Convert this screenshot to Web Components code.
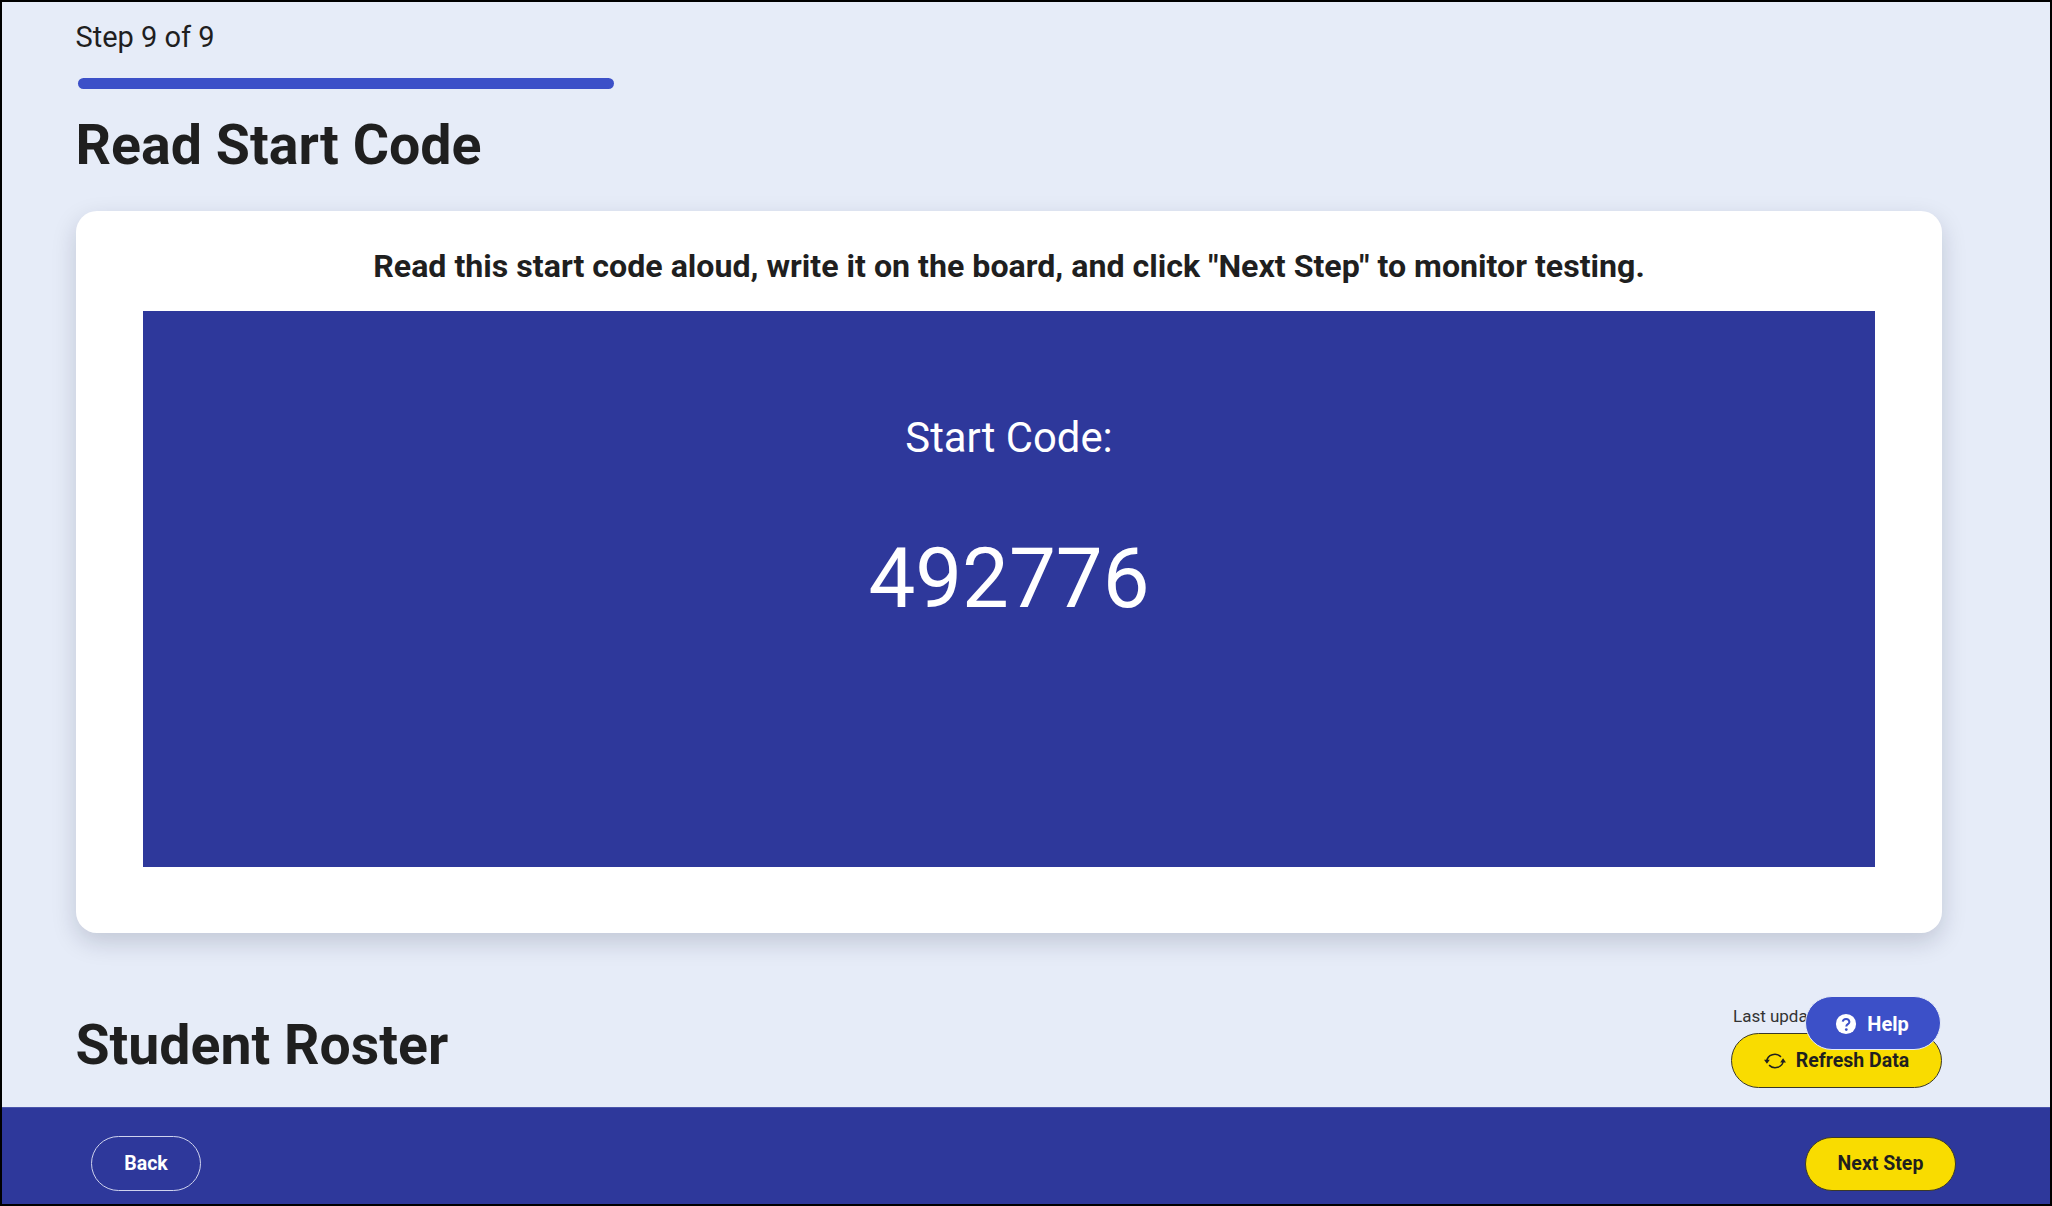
<!DOCTYPE html>
<html lang="en"><head><meta charset="utf-8"><title>Read Start Code</title>
<style>html,body{margin:0;padding:0;height:100%;background:#000}body{font-family:Roboto,"Liberation Sans",sans-serif}</style>
</head><body>
<app-frame>
  <step-progress label="Step 9 of 9"></step-progress>
  <section-title>Read Start Code</section-title>
  <start-card instruction='Read this start code aloud, write it on the board, and click "Next Step" to monitor testing.' code="492776"></start-card>
  <roster-head></roster-head>
  <app-footer slot="footer"></app-footer>
  <help-button slot="overlay"></help-button>
</app-frame>
<script>
function def(name, html, init){
  customElements.define(name, class extends HTMLElement{
    constructor(){super();const r=this.attachShadow({mode:'open'});r.innerHTML=html; }
    connectedCallback(){ if(init) init(this,this.shadowRoot); }
  });
}
def('app-frame',`<style>
:host{display:flex;flex-direction:column;box-sizing:border-box;width:2052px;height:1206px;border:2px solid #000;background:#e6ecf8;position:relative;overflow:hidden;color:#1f1f1f}
main{flex:1;min-height:0;overflow:hidden;padding:0 108px 0 74px}
.o{position:absolute;left:1803px;top:994px}
</style><main><slot></slot></main><slot name="footer"></slot><div class="o"><slot name="overlay"></slot></div>`);
def('step-progress',`<style>
:host{display:block;padding-top:15.5px}
.l{font:400 29px/38px Roboto,sans-serif;color:#1f1f1f;margin-left:-.5px}
.b{margin:22.5px 0 0 2px;width:536px;height:11px;border-radius:6px;background:#3c50c8}
</style><div class="l"></div><div class="b"></div>`,(h,r)=>{r.querySelector('.l').textContent=h.getAttribute('label')});
def('section-title',`<style>
:host{display:block;margin-top:22.5px;margin-left:-.5px;font:700 55.5px/68px Roboto,sans-serif;color:#1f1f1f}
</style><slot></slot>`);
def('start-card',`<style>
:host{display:block;box-sizing:border-box;margin-top:31.7px;height:722px;background:#fff;border-radius:21px;padding:34.5px 67px 0;box-shadow:0 9px 24px rgba(10,20,50,.17)}
p{margin:0;height:65.5px;font:700 32.15px/40px Roboto,sans-serif;color:#1f1f1f;text-align:center}
.box{height:556px;background:#2e389b;color:#fff;text-align:center;box-sizing:border-box;padding-top:100px}
.a{font:400 41.8px/54px Roboto,sans-serif}
.c{font:400 83.4px/100px Roboto,sans-serif;margin-top:64.2px}
</style><p></p><div class="box"><div class="a">Start Code:</div><div class="c"></div></div>`,(h,r)=>{r.querySelector('p').textContent=h.getAttribute('instruction');r.querySelector('.c').textContent=h.getAttribute('code')});
def('roster-head',`<style>
:host{display:flex;justify-content:space-between;align-items:flex-start;margin-top:68.5px}
h2{margin:0;margin-left:-.5px;font:700 55.4px/68px Roboto,sans-serif;color:#1f1f1f;padding-top:10px}
.r{display:flex;flex-direction:column;align-items:flex-start;width:211px}
.u{font:400 17px/22px Roboto,sans-serif;color:#333;margin:3px 0 6.3px 2px;white-space:nowrap}
</style><h2>Student Roster</h2><div class="r"><div class="u">Last updated</div><pill-button variant="refresh">Refresh Data</pill-button></div>`);
def('pill-button',`<style>
:host{display:inline-flex;align-items:center;justify-content:center;box-sizing:border-box;height:54px;border-radius:28px;font:700 19.5px/24px Roboto,sans-serif;gap:10px}
:host([variant=refresh]){width:211px;height:55.5px;background:#f9dc00;border:1.5px solid #3a3828;color:#1f1f1f}
:host([variant=next]){width:151px;height:54px;background:#f9dc00;border:1.5px solid #3a3828;color:#1f1f1f}
:host([variant=back]){width:110px;height:55px;border:1.5px solid #cfd3ee;color:#fff;background:transparent}
svg{display:none;width:22px;height:22px}
:host([variant=refresh]) svg{display:block}
</style><svg viewBox="0 0 24 24" fill="none" stroke="#1f1f1f" stroke-width="1.7"><path d="M3 12.5C3.5 4.5 13.5 2.5 18.5 7.5"/><path d="M21 11.5C20.5 19.5 10.5 21.5 5.5 16.5"/><path d="M0 10.5h6.4L3.2 15zM17.6 13.5h6.4L20.8 9z" fill="#1f1f1f" stroke="none"/></svg><slot></slot>`);
def('app-footer',`<style>
:host{display:flex;justify-content:space-between;align-items:center;height:97px;flex:none;background:#2e389b;padding:15px 94px 0 89px;border-top:1px solid #4a55ab;box-sizing:border-box}
</style><pill-button variant="back">Back</pill-button><pill-button variant="next">Next Step</pill-button>`);
def('help-button',`<style>
:host{display:flex;align-items:center;justify-content:center;gap:10px;box-sizing:border-box;width:136px;height:54px;border-radius:27px;background:#3c50c8;border:1px solid #e6ecf8;color:#fff;font:700 20px/24px Roboto,sans-serif;padding:1px 2px 0 0}
svg{width:22px;height:22px}
</style><svg viewBox="0 0 24 24"><circle cx="12" cy="12" r="11" fill="#fff"/><path d="M8.4 9.4a3.7 3.7 0 0 1 7.3.3c0 2.5-3.4 2.5-3.4 5" fill="none" stroke="#3c50c8" stroke-width="2.2"/><circle cx="12.3" cy="18" r="1.5" fill="#3c50c8"/></svg>Help`);
</script>
</body></html>
